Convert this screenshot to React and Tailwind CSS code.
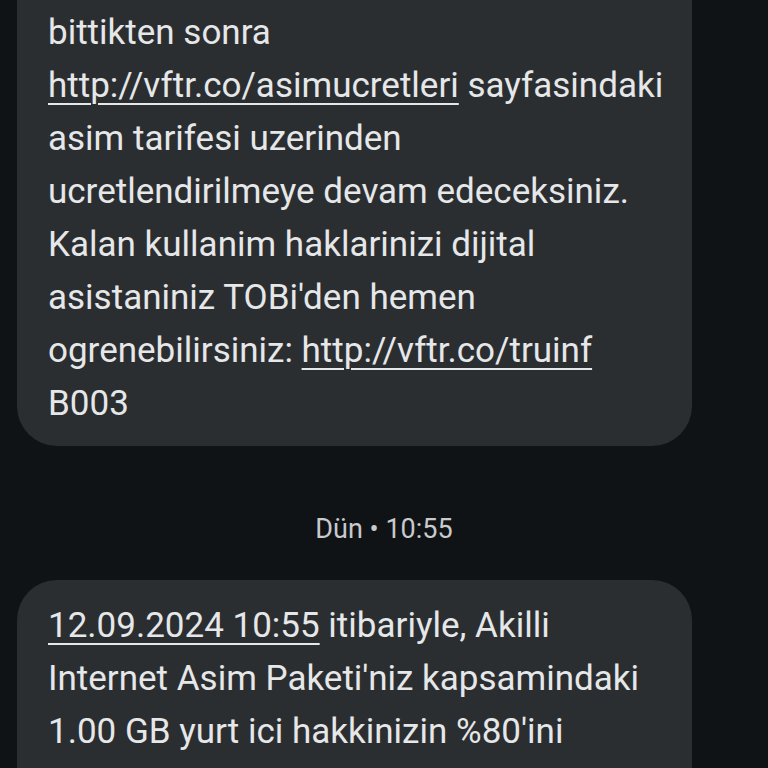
import React from 'react';

function Link({ children }) {
  return (
    <span className="underline decoration-2 underline-offset-[6px]">{children}</span>
  );
}

export default function App() {
  return (
    <div
      className="h-[768px] w-[768px] overflow-hidden bg-[#101316] text-[#e6e7e8]"
      style={{ fontFamily: 'Roboto, "Noto Sans", sans-serif' }}
    >
      <div className="flex flex-col">
        {/* earlier message, top cut off */}
        <div className="ml-[17px] w-[675px] rounded-b-[40px] bg-[#2b2e31] pl-[31px] pr-4 pt-[6px] pb-[16px] text-[35px] leading-[53px]">
          bittikten sonra
          <br />
          <Link>http://vftr.co/asimucretleri</Link> sayfasindaki
          <br />
          asim tarifesi uzerinden
          <br />
          ucretlendirilmeye devam edeceksiniz.
          <br />
          Kalan kullanim haklarinizi dijital
          <br />
          asistaniniz TOBi'den hemen
          <br />
          ogrenebilirsiniz: <Link>http://vftr.co/truinf</Link>
          <br />
          B003
        </div>

        <div className="flex h-[134px] items-start justify-center pt-[66px] text-[27px] leading-[34px] text-[#c8cacb]">
          Dün • 10:55
        </div>

        <div className="ml-[17px] w-[675px] rounded-[40px] bg-[#2b2e31] pl-[31px] pr-4 pt-[19px] pb-[15px] text-[35px] leading-[53px]">
          <Link>12.09.2024 10:55</Link> itibariyle, Akilli
          <br />
          Internet Asim Paketi'niz kapsamindaki
          <br />
          1.00 GB yurt ici hakkinizin %80'ini
          <br />
          kullandiniz. Paketinizin tamami bittikten
        </div>
      </div>
    </div>
  );
}
